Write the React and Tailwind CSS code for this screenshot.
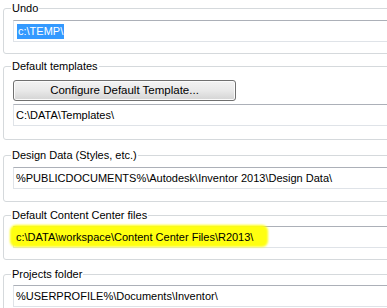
function Group({ label, className = "", children }) {
  return (
    <fieldset
      className={`ml-[3px] w-[440px] rounded-[3px] border border-[#d5d9dc] pl-[9px] pr-2 ${className}`}
    >
      <legend className="-ml-[2px] px-[1px] text-[11px] leading-[14px] text-black">{label}</legend>
      {children}
    </fieldset>
  );
}

function Field({ children, className = "" }) {
  return (
    <div
      className={`relative flex h-[22px] items-center border border-[#dfe3e8] border-t-[#acb0b8] bg-white pl-[2px] text-[11px] text-black ${className}`}
    >
      {children}
    </div>
  );
}

export default function App() {
  return (
    <div
      className="h-[308px] w-[387px] overflow-hidden bg-white pt-[1px]"
      style={{ fontFamily: '"Liberation Sans", Arial, sans-serif' }}
    >
      <Group label="Undo" className="pb-[11px]">
        <Field className="mt-[5px] border-[#c1d7ea] border-t-[#5b7f9f] bg-[#fdfeff] pl-[3px]">
          <span className="bg-[#3399ff] px-[1px] leading-[15px] text-white">c:\TEMP\</span>
        </Field>
      </Group>

      <Group label="Default templates" className="mt-[5px] pb-[13px]">
        <button className="mt-[7px] flex h-[21px] w-[223px] items-center justify-center rounded-[3px] border border-[#707070] bg-gradient-to-b from-[#f3f3f3] via-[#e9e9e9] to-[#d4d4d4] text-[11.5px] text-black shadow-[inset_0_0_0_1px_#fbfbfb]">
          Configure Default Template...
        </button>
        <Field className="mt-[3px]">
          <span>C:\DATA\Templates\</span>
        </Field>
      </Group>

      <Group label="Design Data (Styles, etc.)" className="mt-[8px] pb-[12px]">
        <Field className="mt-[5px]">
          <span>%PUBLICDOCUMENTS%\Autodesk\Inventor 2013\Design Data\</span>
        </Field>
      </Group>

      <Group label="Default Content Center files" className="mt-[6px] pb-[11px]">
        <Field className="mt-[4px]">
          <div className="absolute -left-[4px] top-[-2px] h-[22px] w-[258px] rounded-[6px] bg-[#ffff10] blur-[1px]" />
          <span className="relative">c:\DATA\workspace\Content Center Files\R2013\</span>
        </Field>
      </Group>

      <Group label="Projects folder" className="mt-[7px] pb-[11px]">
        <Field className="mt-[4px]">
          <span>%USERPROFILE%\Documents\Inventor\</span>
        </Field>
      </Group>
    </div>
  );
}
